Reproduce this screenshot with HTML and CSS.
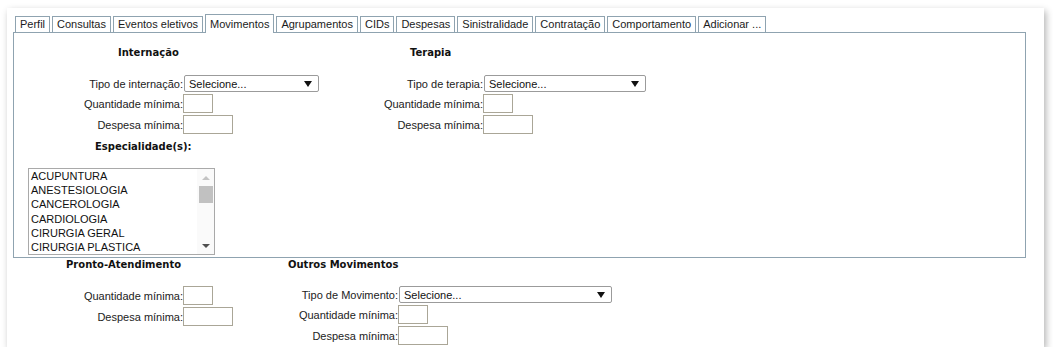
FILE: index.html
```html
<!DOCTYPE html>
<html lang="pt-BR">
<head>
    <meta charset="UTF-8">
    <title>Movimentos</title>
    <link rel="stylesheet" href="styles.css">
</head>
<body>
    <div class="card">
        <ul class="tabs">
            <li class="tab">Perfil</li>
            <li class="tab">Consultas</li>
            <li class="tab">Eventos eletivos</li>
            <li class="tab active">Movimentos</li>
            <li class="tab">Agrupamentos</li>
            <li class="tab">CIDs</li>
            <li class="tab">Despesas</li>
            <li class="tab">Sinistralidade</li>
            <li class="tab">Contratação</li>
            <li class="tab">Comportamento</li>
            <li class="tab">Adicionar ...</li>
        </ul>

        <div class="panel">
            <div class="form-grid upper">
                <h4 class="head head-intern">Internação</h4>
                <h4 class="head head-terapia">Terapia</h4>

                <label>Tipo de internação:</label>
                <span class="select-wrap w-intern"><select><option>Selecione...</option></select></span>
                <label>Tipo de terapia:</label>
                <span class="select-wrap w-terapia"><select><option>Selecione...</option></select></span>

                <label>Quantidade mínima:</label>
                <input type="text" class="qty">
                <label>Quantidade mínima:</label>
                <input type="text" class="qty">

                <label>Despesa mínima:</label>
                <input type="text" class="money">
                <label>Despesa mínima:</label>
                <input type="text" class="money">
            </div>

            <h4 class="head head-esp">Especialidade(s):</h4>
            <div class="listbox">
                <ul class="options">
                    <li>ACUPUNTURA</li>
                    <li>ANESTESIOLOGIA</li>
                    <li>CANCEROLOGIA</li>
                    <li>CARDIOLOGIA</li>
                    <li>CIRURGIA GERAL</li>
                    <li>CIRURGIA PLASTICA</li>
                </ul>
                <div class="scrollbar">
                    <span class="sb-btn"><span class="tri-up"></span></span>
                    <span class="thumb"></span>
                    <span class="sb-btn sb-bottom"><span class="tri-down"></span></span>
                </div>
            </div>
        </div>

        <div class="lower">
            <div class="form-grid pronto">
                <h4 class="head head-pronto">Pronto-Atendimento</h4>
                <label>Quantidade mínima:</label>
                <input type="text" class="qty">
                <label>Despesa mínima:</label>
                <input type="text" class="money">
            </div>
            <div class="form-grid outros">
                <h4 class="head head-outros">Outros Movimentos</h4>
                <label>Tipo de Movimento:</label>
                <span class="select-wrap w-outros"><select><option>Selecione...</option></select></span>
                <label>Quantidade mínima:</label>
                <input type="text" class="qty">
                <label>Despesa mínima:</label>
                <input type="text" class="money">
            </div>
        </div>
    </div>
</body>
</html>
```

FILE: styles.css
```css
body {
    margin: 0;
    background: #fff;
    font-family: "Liberation Sans", Arial, sans-serif;
    font-size: 11px;
    color: #222;
}
.card {
    box-sizing: border-box;
    margin: 8px 0 0 7px;
    width: 1037px;
    height: 339px;
    padding: 6px 0 0 6px;
    background: #fff;
    box-shadow: 2px 3px 7px rgba(0, 0, 0, 0.3);
}

/* tabs */
.tabs {
    display: flex;
    align-items: flex-end;
    gap: 2px;
    list-style: none;
    margin: 0;
    padding: 0 0 0 2px;
    height: 18px;
}
.tab {
    border: 1px solid #8fa3b0;
    border-bottom: none;
    padding: 0 4px;
    line-height: 15px;
    background: #fff;
    color: #1b1b1b;
    white-space: nowrap;
}
.tab.active {
    position: relative;
    z-index: 1;
    padding: 2px 4px 1px;
    margin-bottom: -1px;
}

/* panel */
.panel {
    box-sizing: border-box;
    width: 1013px;
    height: 226px;
    border: 1px solid #8fa3b0;
    padding-top: 13px;
}
.form-grid {
    display: grid;
    row-gap: 2px;
    align-items: center;
}
.upper { grid-template-columns: 169px 135px 165px 1fr; }
.head {
    margin: 0 0 13px;
    font-family: "DejaVu Sans", Verdana, sans-serif;
    font-size: 10px;
    font-weight: bold;
    line-height: 14px;
    color: #111;
}
.head-intern { grid-column: 1 / 3; padding-left: 104px; }
.head-terapia { grid-column: 3 / 5; padding-left: 92px; }
.head-esp { margin: 6px 0 14px; padding-left: 81px; }

label {
    text-align: right;
    white-space: nowrap;
    line-height: 14px;
}
input {
    box-sizing: border-box;
    height: 19px;
    margin: 0;
    padding: 1px 2px;
    border: 1px solid #aaa697;
    justify-self: start;
    font: inherit;
}
.qty { width: 30px; }
.money { width: 50px; }

.select-wrap {
    position: relative;
    justify-self: start;
    margin-left: 1px;
}
.select-wrap::after {
    content: "";
    position: absolute;
    right: 7px;
    top: 6px;
    border-left: 4px solid transparent;
    border-right: 4px solid transparent;
    border-top: 6px solid #111;
    pointer-events: none;
}
select {
    appearance: none;
    -webkit-appearance: none;
    box-sizing: border-box;
    display: block;
    width: 100%;
    height: 17px;
    margin: 0;
    padding: 0 4px;
    border: 1px solid #9b9b9b;
    border-radius: 2px;
    background: #fff;
    font: inherit;
    color: #111;
}
.w-intern { width: 135px; }
.w-terapia { width: 162px; }
.w-outros { width: 213px; }

/* specialties list */
.listbox {
    box-sizing: border-box;
    display: flex;
    width: 187px;
    height: 87px;
    margin-left: 14px;
    border: 1px solid #a9a9a9;
    overflow: hidden;
}
.options {
    flex: 1;
    list-style: none;
    margin: 0;
    padding: 0 0 0 2px;
}
.options li {
    line-height: 14.2px;
    color: #111;
}
.scrollbar {
    display: flex;
    flex-direction: column;
    width: 17px;
    background: #fafafa;
}
.sb-btn {
    display: flex;
    align-items: center;
    justify-content: center;
    height: 17px;
}
.sb-bottom { margin-top: auto; }
.tri-up {
    border-left: 4px solid transparent;
    border-right: 4px solid transparent;
    border-bottom: 4px solid #c3c3c3;
}
.tri-down {
    border-left: 4px solid transparent;
    border-right: 4px solid transparent;
    border-top: 4px solid #505050;
}
.thumb {
    height: 17px;
    margin: 0 1px 0 2px;
    background: #c1c1c1;
}

/* lower section */
.lower {
    display: flex;
    align-items: flex-start;
    padding-left: 1px;
}
.lower .head { margin-bottom: 12px; }
.pronto { grid-template-columns: 169px 50px; }
.outros { grid-template-columns: 165px auto; }
.head-pronto { grid-column: 1 / 3; padding-left: 52px; }
.head-outros { grid-column: 1 / 3; padding-left: 55px; }
```
